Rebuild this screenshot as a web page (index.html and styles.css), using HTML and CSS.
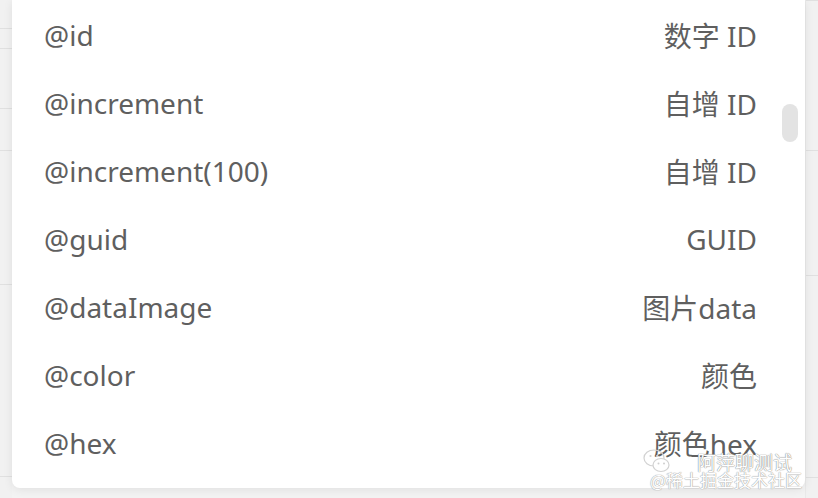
FILE: index.html
```html
<!DOCTYPE html>
<html lang="zh">
<head>
<meta charset="utf-8">
<link rel="stylesheet" href="styles.css">
</head>
<body>
<div class="page">
  <div class="strip strip-left">
    <div class="seg" style="height:29px"></div>
    <div class="seg" style="height:20px"></div>
    <div class="seg" style="height:60px"></div>
    <div class="seg" style="height:42px"></div>
    <div class="seg" style="height:134px"></div>
    <div class="seg" style="height:192px"></div>
  </div>
  <div class="dropdown">
    <ul class="list">
      <li class="item"><span class="name">@id</span><span class="desc">数字 ID</span></li>
      <li class="item"><span class="name">@increment</span><span class="desc">自增 ID</span></li>
      <li class="item"><span class="name">@increment(100)</span><span class="desc">自增 ID</span></li>
      <li class="item"><span class="name">@guid</span><span class="desc">GUID</span></li>
      <li class="item"><span class="name">@dataImage</span><span class="desc">图片data</span></li>
      <li class="item"><span class="name">@color</span><span class="desc">颜色</span></li>
      <li class="item"><span class="name">@hex</span><span class="desc">颜色hex</span></li>
    </ul>
    <div class="thumb"></div>
    <div class="watermark">
      <svg class="wm-icon" width="30" height="26" viewBox="0 0 30 26">
        <ellipse cx="12" cy="10" rx="10" ry="8" fill="none" stroke="#d2d2d2" stroke-width="1.2"/>
        <ellipse cx="19" cy="17" rx="8" ry="6.5" fill="#fff" stroke="#d2d2d2" stroke-width="1.2"/>
        <circle cx="8.5" cy="8" r="1.1" fill="#cfcfcf"/>
        <circle cx="15" cy="8" r="1.1" fill="#cfcfcf"/>
        <circle cx="16.5" cy="15.5" r="1" fill="#cfcfcf"/>
        <circle cx="22" cy="15.5" r="1" fill="#cfcfcf"/>
      </svg>
      <span class="wm-name">阿萍聊测试</span>
      <span class="wm-site">@稀土掘金技术社区</span>
    </div>
  </div>
  <div class="strip strip-right">
    <div class="seg" style="height:1px"></div>
    <div class="seg" style="height:150px"></div>
    <div class="seg" style="height:125px"></div>
    <div class="seg" style="height:202px"></div>
  </div>
</div>
</body>
</html>
```
FILE: styles.css
```css
* { box-sizing: border-box; }
html, body {
  margin: 0;
  padding: 0;
  width: 818px;
  height: 498px;
  overflow: hidden;
  background: #f3f3f3;
  font-family: "Noto Sans", "Noto Sans CJK SC", sans-serif;
}
.page {
  display: flex;
  align-items: flex-start;
  height: 498px;
}
.strip {
  display: flex;
  flex-direction: column;
  height: 498px;
  background: #f1f1f1;
}
.strip-left { width: 12px; flex: none; }
.strip-right { width: 13px; flex: none; border-left: 1px solid #e9e9e9; }
.seg { border-bottom: 1px solid #e0e0e0; flex: none; }
.dropdown {
  position: relative;
  width: 793px;
  height: 488px;
  flex: none;
  background: #fff;
  border-radius: 0 0 8px 8px;
  box-shadow: 0 2px 10px rgba(0, 0, 0, 0.08);
  z-index: 1;
}
.list {
  list-style: none;
  margin: 0;
  padding: 1px 0 0 0;
}
.item {
  height: 68px;
  display: flex;
  align-items: center;
  justify-content: space-between;
  padding: 0 48px 0 32px;
  font-size: 28px;
  color: #5f5f5f;
}
.thumb {
  position: absolute;
  right: 7px;
  top: 104px;
  width: 16px;
  height: 38px;
  border-radius: 8px;
  background: #e3e3e3;
}
.watermark {
  position: absolute;
  left: 624px;
  top: 448px;
  width: 160px;
  height: 40px;
  color: #fff;
  font-family: "Noto Sans CJK SC", sans-serif;
}
.wm-icon { position: absolute; left: 6px; top: 0; }
.wm-name {
  position: absolute;
  left: 61px;
  top: 4px;
  font-size: 19px;
  line-height: 19px;
  white-space: nowrap;
  text-shadow: 0 0 1px #888, 0 0 1px #888;
}
.wm-site {
  position: absolute;
  left: 14px;
  top: 23px;
  font-size: 17px;
  line-height: 17px;
  white-space: nowrap;
  text-shadow: 0 0 1px #999, 0 0 1px #999;
}
```
